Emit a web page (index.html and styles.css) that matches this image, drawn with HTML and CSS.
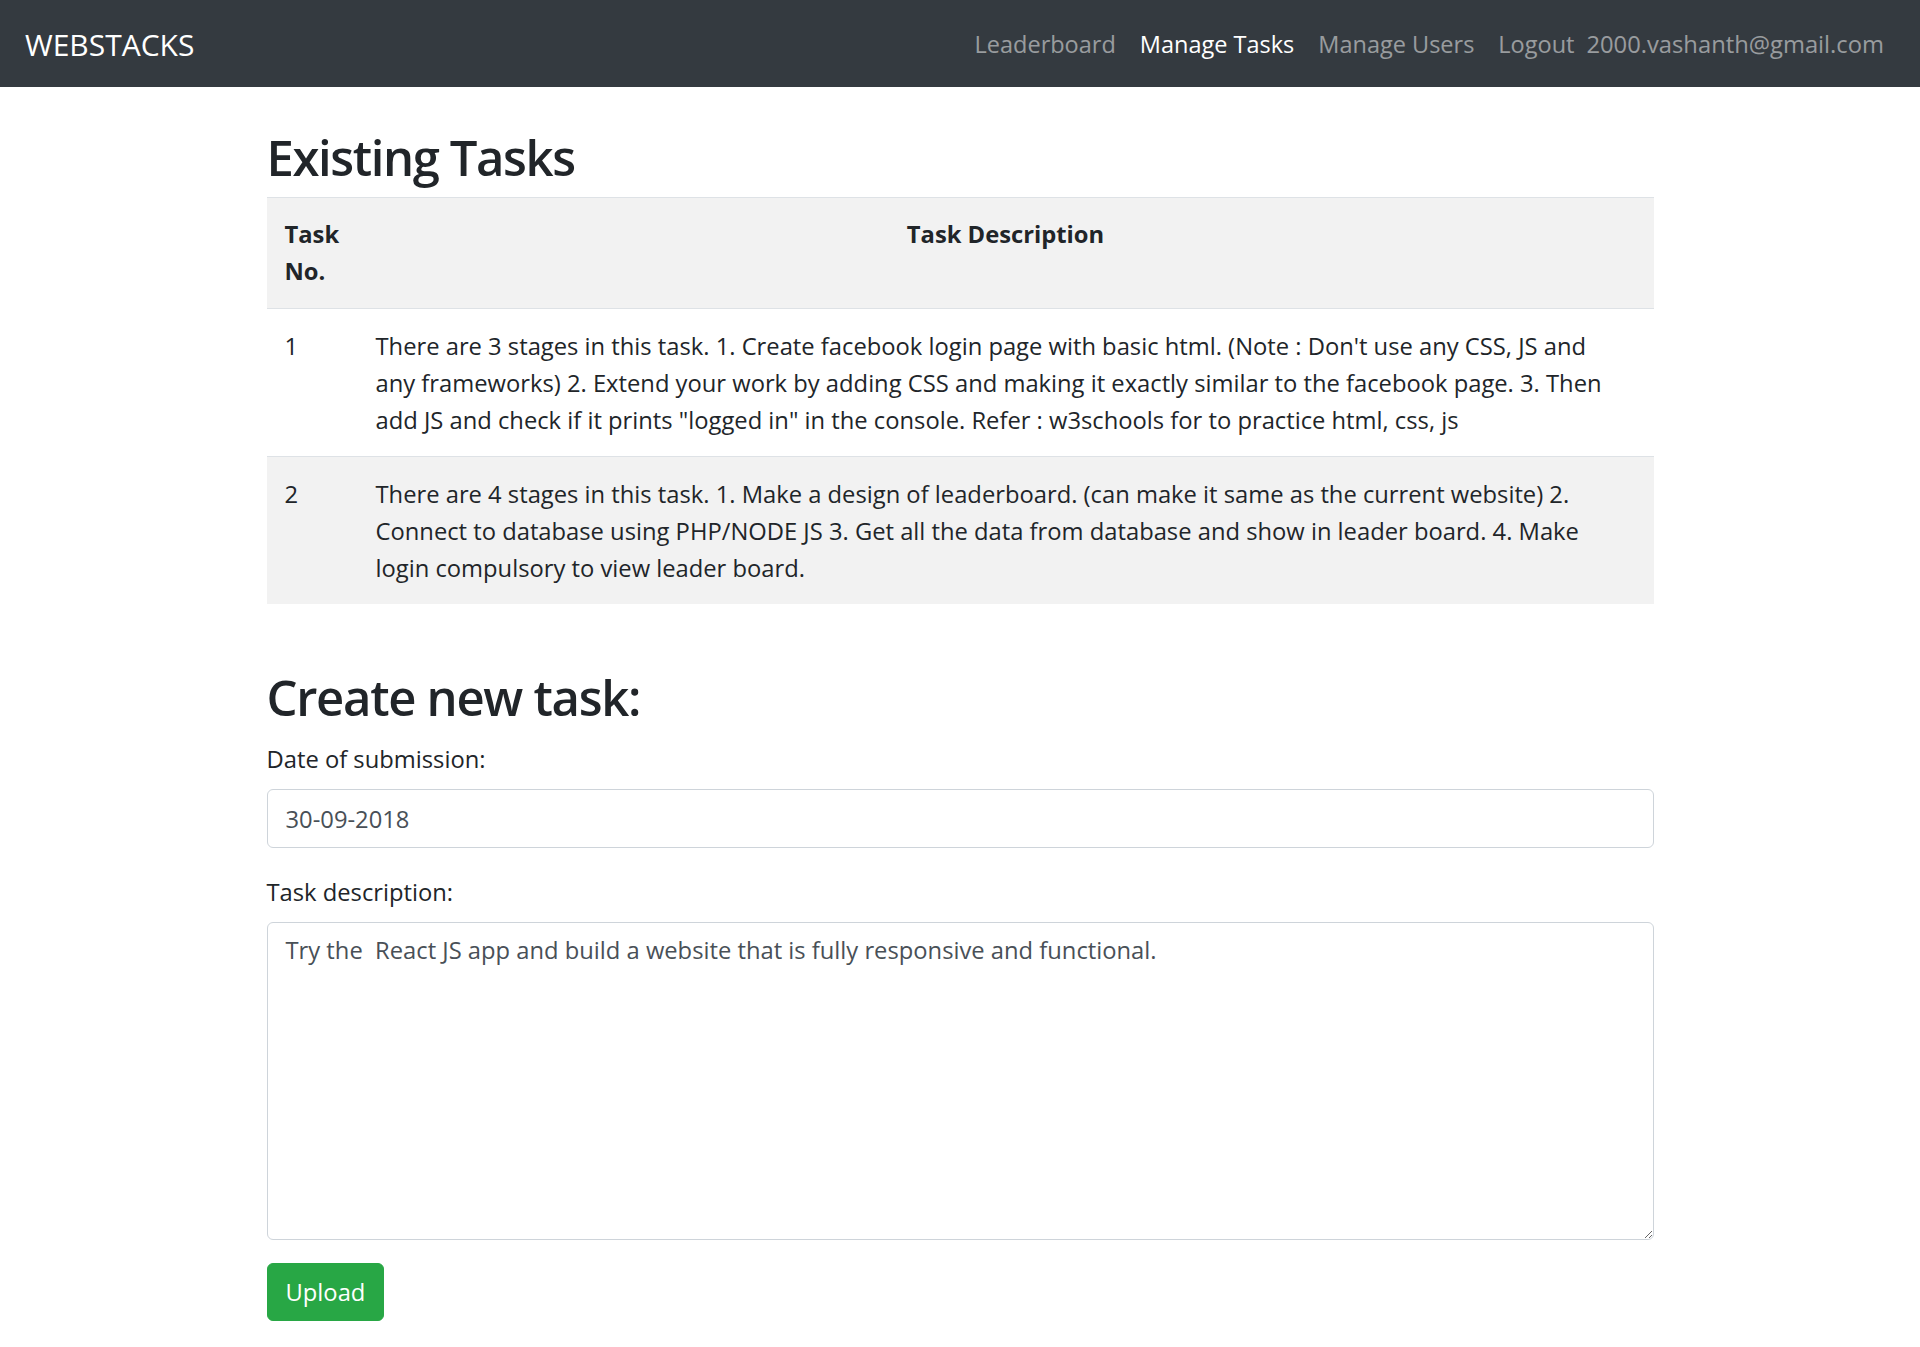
FILE: index.html
```html
<!DOCTYPE html>
<html lang="en">
<head>
<meta charset="utf-8">
<title>WEBSTACKS - Manage Tasks</title>
<link rel="stylesheet" href="styles.css">
</head>
<body>
<nav class="navbar">
  <a class="brand" href="#">WEBSTACKS</a>
  <ul class="nav">
    <li><a class="nav-link" href="#">Leaderboard</a></li>
    <li><a class="nav-link active" href="#">Manage Tasks</a></li>
    <li><a class="nav-link" href="#">Manage Users</a></li>
    <li><a class="nav-link" href="#">Logout</a></li>
    <li><span class="nav-user">2000.vashanth@gmail.com</span></li>
  </ul>
</nav>

<main class="container">
  <h1 class="page-title">Existing Tasks</h1>
  <table class="tasks">
    <colgroup><col class="col-no"><col></colgroup>
    <tbody>
      <tr class="stripe">
        <th class="th-no">Task No.</th>
        <th class="th-desc">Task Description</th>
      </tr>
      <tr>
        <td>1</td>
        <td>There are 3 stages in this task. 1. Create facebook login page with basic html. (Note : Don't use any CSS, JS and<br>any frameworks) 2. Extend your work by adding CSS and making it exactly similar to the facebook page. 3. Then<br>add JS and check if it prints "logged in" in the console. Refer : w3schools for to practice html, css, js</td>
      </tr>
      <tr class="stripe">
        <td>2</td>
        <td>There are 4 stages in this task. 1. Make a design of leaderboard. (can make it same as the current website) 2.<br>Connect to database using PHP/NODE JS 3. Get all the data from database and show in leader board. 4. Make<br>login compulsory to view leader board.</td>
      </tr>
    </tbody>
  </table>

  <h1 class="section-title">Create new task:</h1>
  <form class="task-form">
    <div class="form-group">
      <label for="date">Date of submission:</label>
      <input id="date" class="form-control" type="text" value="30-09-2018">
    </div>
    <div class="form-group form-group-last">
      <label for="desc">Task description:</label>
      <textarea id="desc" class="form-control textarea">Try the  React JS app and build a website that is fully responsive and functional.</textarea>
    </div>
    <button type="button" class="btn-success">Upload</button>
  </form>
</main>
</body>
</html>
```

FILE: styles.css
```css
* { box-sizing: border-box; }

html, body {
  margin: 0;
  padding: 0;
  background: #fff;
}

body {
  font-family: "Open Sans", "Noto Sans", sans-serif;
  font-size: 23.75px;
  line-height: 37px;
  color: #212529;
}

/* ---------- navbar ---------- */
.navbar {
  height: 87px;
  background: #343a40;
  display: flex;
  align-items: center;
  padding: 0 24px;
}

.brand {
  color: #fff;
  text-decoration: none;
  font-size: 30px;
  line-height: 44px;
  margin-top: 2px;
  padding-left: 1px;
}

.nav {
  list-style: none;
  margin: 2px 0 0 auto;
  padding: 0;
  display: flex;
  align-items: center;
}

.nav-link {
  display: block;
  padding: 0 12px;
  font-size: 23.5px;
  line-height: 37px;
  color: rgba(255, 255, 255, 0.5);
  text-decoration: none;
}

.nav-link.active {
  color: #fff;
}

.nav-user {
  display: block;
  padding: 0 12px 0 0;
  font-size: 23.75px;
  line-height: 37px;
  color: rgba(255, 255, 255, 0.5);
}

/* ---------- container ---------- */
.container {
  width: 1387px;
  margin: 0 auto;
  padding-top: 38px;
  padding-bottom: 24px;
}

.page-title,
.section-title {
  font-size: 49px;
  font-weight: 600;
  line-height: 64px;
  margin: 0 0 8px;
  letter-spacing: -1.4px;
}

.section-title {
  margin-top: 61px;
  margin-bottom: 12px;
  letter-spacing: -1.3px;
}

/* ---------- table ---------- */
.tasks {
  width: 100%;
  border-collapse: collapse;
  table-layout: fixed;
}

.col-no { width: 91px; }

.tasks th,
.tasks td {
  padding: 18px;
  border-top: 1px solid #dee2e6;
  vertical-align: top;
  text-align: left;
}

.tasks td {
  padding-top: 19px;
  padding-bottom: 17px;
}

.tasks th {
  font-weight: 700;
}

.tasks .th-desc {
  text-align: center;
}

.tasks tr.stripe {
  background: #f2f2f2;
}

/* ---------- form ---------- */
.form-group {
  margin-bottom: 26px;
}

.form-group-last {
  margin-bottom: 23px;
}

.form-group label {
  display: block;
  margin-bottom: 11px;
}

.form-control {
  display: block;
  width: 100%;
  height: 59px;
  padding: 9px 18px;
  font-family: inherit;
  font-size: 23.75px;
  line-height: 37px;
  color: #495057;
  background: #fff;
  border: 1px solid #ced4da;
  border-radius: 6px;
  outline: none;
}

.textarea {
  height: 318px;
  resize: vertical;
}

.btn-success {
  display: inline-block;
  height: 58px;
  padding: 9px 18px;
  font-family: inherit;
  font-size: 23.75px;
  line-height: 37px;
  color: #fff;
  background: #28a745;
  border: 1px solid #28a745;
  border-radius: 6px;
  cursor: pointer;
}
```
